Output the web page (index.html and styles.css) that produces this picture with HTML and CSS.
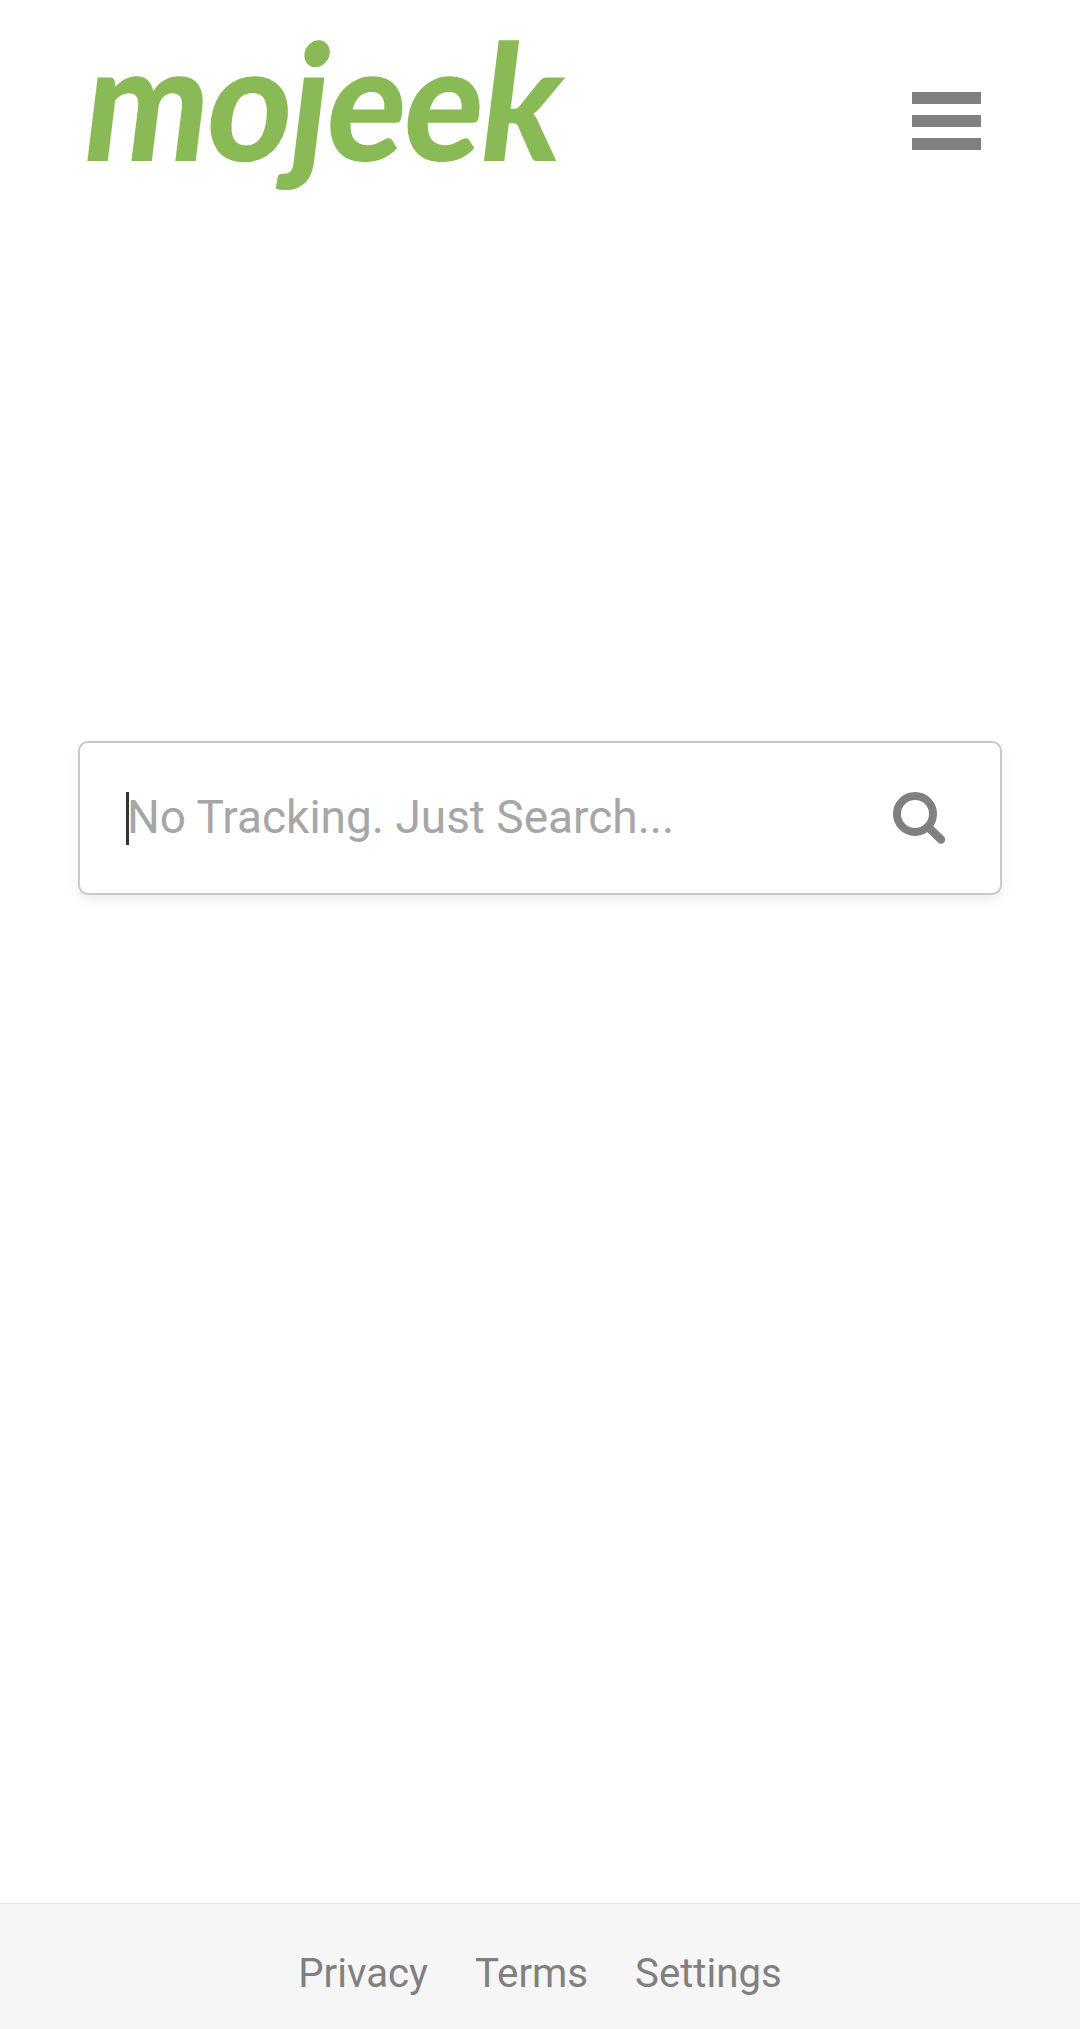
FILE: index.html
```html
<!DOCTYPE html>
<html lang="en">
<head>
<meta charset="utf-8">
<title>Mojeek</title>
<link rel="stylesheet" href="styles.css">
</head>
<body>
<div class="page">
  <header class="header">
    <a class="logo" href="#">mojeek</a>
    <button class="menu" type="button" aria-label="Menu">
      <span class="menu-bar"></span>
      <span class="menu-bar"></span>
      <span class="menu-bar"></span>
    </button>
  </header>
  <main class="main">
    <form class="search">
      <span class="caret"></span>
      <input class="search-input" type="text" placeholder="No Tracking. Just Search...">
      <button class="search-btn" type="button" aria-label="Search">
        <svg class="search-icon" viewBox="0 0 52 52" width="52" height="52">
          <circle cx="22" cy="22" r="18" fill="none" stroke="#808080" stroke-width="8"/>
          <path d="M35 35 L48 47.5" fill="none" stroke="#808080" stroke-width="8.5" stroke-linecap="round"/>
        </svg>
      </button>
    </form>
  </main>
  <footer class="footer">
    <a class="footer-link" href="#">Privacy</a>
    <a class="footer-link" href="#">Terms</a>
    <a class="footer-link" href="#">Settings</a>
  </footer>
</div>
</body>
</html>
```
FILE: styles.css
```css
* { box-sizing: border-box; }
html, body { margin: 0; padding: 0; background: #fff; }
.page {
  display: flex;
  flex-direction: column;
  height: 2029px;
  font-family: Roboto, "Liberation Sans", sans-serif;
}
.header {
  display: flex;
  justify-content: space-between;
  align-items: flex-start;
  height: 200px;
  padding: 0 99px 0 79px;
}
.logo {
  display: inline-block;
  font-family: Lato, "Open Sans", sans-serif;
  font-weight: 900;
  font-size: 162px;
  line-height: 197px;
  letter-spacing: -2px;
  color: #8aba55;
  text-decoration: none;
  transform-origin: 0 160px;
  transform: skewX(-7deg) scaleX(0.91);
}
.menu {
  display: flex;
  flex-direction: column;
  gap: 11px;
  width: 69px;
  margin-top: 92px;
  padding: 0;
  border: 0;
  background: none;
}
.menu-bar {
  display: block;
  height: 12px;
  background: #808080;
}
.main {
  flex: 1;
  padding: 541px 78px 0;
}
.search {
  position: relative;
  display: flex;
  align-items: center;
  height: 154px;
  padding: 0 55px 0 47px;
  background: #fff;
  border: 2px solid #c8c8c8;
  border-radius: 10px;
  box-shadow: 0 6px 14px rgba(0, 0, 0, 0.07);
}
.caret {
  position: absolute;
  left: 46px;
  top: 49px;
  width: 3px;
  height: 53px;
  background: #333;
}
.search-input {
  flex: 1;
  min-width: 0;
  height: 60px;
  margin-top: -2px;
  padding: 0;
  border: 0;
  outline: 0;
  background: transparent;
  font-family: Roboto, "Liberation Sans", sans-serif;
  font-size: 46px;
  color: #333;
}
.search-input::placeholder { color: #a6a6a6; opacity: 1; }
.search-btn {
  display: flex;
  padding: 0;
  border: 0;
  background: none;
}
.search-icon { display: block; }
.footer {
  display: flex;
  justify-content: center;
  align-items: center;
  gap: 47px;
  height: 126px;
  padding-top: 13px;
  background: #f6f6f6;
  border-top: 1px solid #e4e4e4;
}
.footer-link {
  font-size: 40.2px;
  color: #808080;
  text-decoration: none;
}
```
